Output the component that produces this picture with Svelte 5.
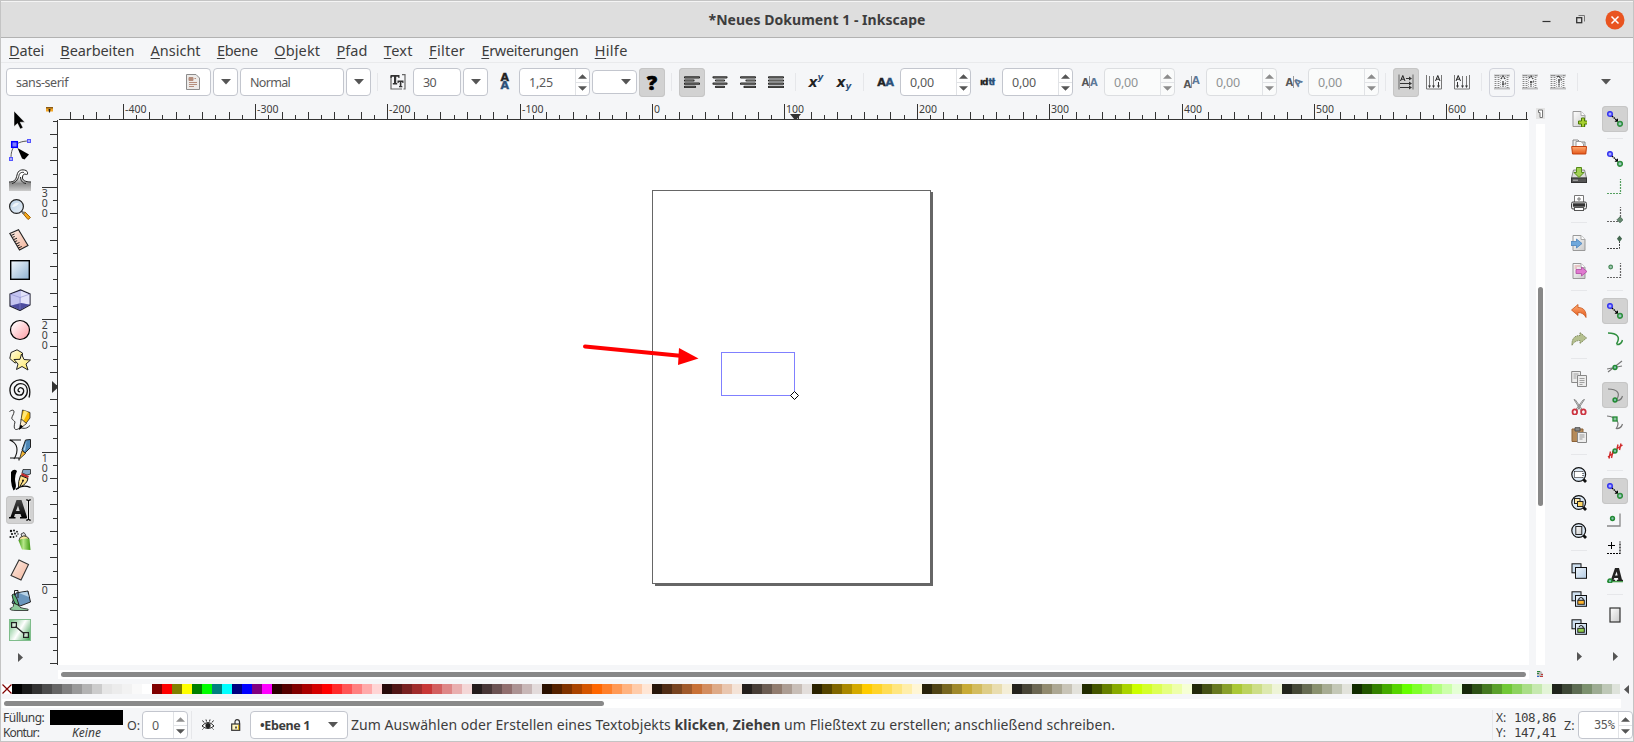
<script>
  // Stretches or tightens tracking so that a label takes the given width.
  function fit(node, width) {
    const natural = node.getBoundingClientRect().width;
    node.style.letterSpacing = (width - natural) / node.textContent.length + 'px';
  }

  const menus = [
    ['Datei', 35], ['Bearbeiten', 74], ['Ansicht', 50], ['Ebene', 41], ['Objekt', 46],
    ['Pfad', 31], ['Text', 29], ['Filter', 36], ['Erweiterungen', 97], ['Hilfe', 33]
  ];

  const palette = (
    '000000 1a1a1a 333333 4d4d4d 666666 808080 999999 b3b3b3 cccccc e6e6e6 ececec f2f2f2 f9f9f9 ffffff ' +
    '800000 ff0000 808000 ffff00 008000 00ff00 008080 00ffff 000080 0000ff 800080 ff00ff ' +
    '2b0000 550000 800000 aa0000 d40000 ff0000 ff2a2a ff5555 ff8080 ffaaaa ffd5d5 ' +
    '280b0b 501616 782121 a02c2c c83737 d35f5f de8787 e9afaf f4d7d7 ' +
    '241c1c 483737 6c5353 916f6f ac9393 c8b7b7 e3dbdb ' +
    '2b1100 552200 803300 aa4400 d45500 ff6600 ff7f2a ff9955 ffb380 ffccaa ffe6d5 ' +
    '28170b 502d16 784421 a05a2c c87137 d38d5f deaa87 e9c6af f4e3d7 ' +
    '241f1c 483e37 6c5d53 917c6f ac9d93 c8beb7 e3dedb ' +
    '2b2200 554400 806600 aa8800 d4aa00 ffcc00 ffd42a ffdd55 ffe680 ffeeaa fff6d5 ' +
    '28220b 504416 786721 a0892c c8ab37 d3bc5f decd87 e9ddaf f4eed7 ' +
    '24221c 484537 6c6753 918a6f aca793 c8c4b7 e3e2db ' +
    '222b00 445500 668000 88aa00 aad400 ccff00 d4ff2a ddff55 e5ff80 eeffaa f6ffd5 ' +
    '22280b 445016 677821 89a02c abc837 bcd35f cdde87 dde9af eef4d7 ' +
    '22241c 454837 676c53 8a916f a7ac93 c4c8b7 e2e3db ' +
    '112b00 225500 338000 44aa00 55d400 66ff00 7fff2a 99ff55 b3ff80 ccffaa e5ffd5 ' +
    '17280b 2d5016 447821 5aa02c 71c837 8dd35f aade87 c6e9af e3f4d7 ' +
    '1f241c 3e4837 5d6c53 7c916f 9dac93 bec8b7 dee3db'
  ).split(' ');

  // Ruler ticks, one for every 10 mm.
  const unit = 1.3235;
  const hTicks = [];
  for (let v = -440; v <= 660; v += 10) {
    hTicks.push({ v, x: Math.floor(594.6 + v * unit) + 0.5, major: v % 100 === 0, top: v % 100 === 0 ? 3 : v % 20 === 0 ? 11 : 14 });
  }
  const vTicks = [];
  for (let v = 350; v >= -60; v -= 10) {
    vTicks.push({ v, y: Math.floor(464.4 - v * unit) + 0.5, major: v % 100 === 0, left: v % 100 === 0 ? 3 : v % 20 === 0 ? 11 : 14 });
  }

  const tools = [
    // select
    '<path d="M5 2V17.500L8.500 14.500L11.200 20L14 18.700L11.200 13.200H15.800Z" fill="#000" stroke="#fff" stroke-width=".5"/>',
    // node
    '<path d="M2 19C2 10 5 2 20 2" fill="none" stroke="#555"/><rect x="2.700" y="2.700" width="5.600" height="5.600" fill="#7d7dff" stroke="#00f" stroke-width="1.500"/><rect x="18.500" y=".5" width="3" height="3" fill="#aaf" stroke="#55f"/><rect x=".5" y="18.500" width="3" height="3" fill="#aaf" stroke="#55f"/><path d="M8.500 9L20 15.500L15.500 20.500L13 19.500Z" fill="#000"/>',
    // tweak
    '<path d="M0 13C5 13 7 11 8 6C9 1 13 0 17 1.500C19 2.500 19 5 17.500 6C16.500 4.500 14 4.500 13.500 8C13 11 16 13 22 13V22H0Z" fill="url(#gWave)"/><path d="M0 13C5 13 7 11 8 6C9 1 13 0 17 1.500C19 2.500 19 5 17.500 6C16.500 4.500 14 4.500 13.500 8C13 11 16 13 22 13M3 14.500C8 13 9.500 9 10 6.500C10.500 3.500 13 3 15 3.500M11.500 8C11.500 11 13 14 17 14.500" fill="none" stroke="#222"/>',
    // zoom
    '<path d="M13.500 14L19 20.500L21.500 18.500L16 13Z" fill="#f4a81c" stroke="#a06000" /><path d="M12.500 12L15.500 15" stroke="#777" stroke-width="2"/><circle cx="7.500" cy="7.500" r="6.900" fill="url(#gGlass)" stroke="#222" stroke-width="1.200"/><path d="M3 8Q5 3 10 4Q8 8 3 8" fill="#fff" opacity=".7"/>',
    // measure
    '<path d="M.8 4.500L9.500 .8L19 16.500L10.500 21Z" fill="url(#gSkin)" stroke="#222" stroke-width="1.100"/><path d="M2 6.500l3.500-1.500M3.200 8.500l2.500-1M4.500 10.700l3.500-1.500M5.700 12.700l2.500-1M7 15l3.500-1.500M8.200 17l2.500-1M9.300 19l3.500-1.500" stroke="#222"/>',
    // rectangle
    '<rect x="1.700" y="1.700" width="18.600" height="18.600" fill="url(#gBlue)" stroke="#000" stroke-width="1.400"/>',
    // 3d box
    '<path d="M1 5L11.500 1L21 5V16L11 21.500L1 17Z" fill="#9a9ade" stroke="#223" stroke-width="1.200"/><path d="M1.500 5.500L12 1.800V14L1.800 16.500Z" fill="#c5c5f0"/><path d="M12 1.800L20.500 5.500V15.500L12 14Z" fill="#e3e3fa"/><path d="M1.800 16.700L12 14L20.500 15.700L11 21Z" fill="#4d4d9f"/><path d="M1 5L11 8.500L21 5M11 8.500V20" fill="none" stroke="#8888cc" opacity=".6"/>',
    // circle
    '<circle cx="11" cy="11" r="9.500" fill="url(#gPink)" stroke="#000" stroke-width="1.200"/>',
    // star
    '<path d="M8 .8L13.500 4L13 12L6 14L.8 9.500L2 3.500Z" fill="url(#gYel)" stroke="#222"/><path d="M12.500 5L15 10.500L21.500 11L17 15L19 21L13 17.500L7.500 20.500L9 15L5 10.500L11 10.300Z" fill="url(#gYel)" stroke="#222"/>',
    // spiral
    '<path d="M11 12.500C9.500 13.500 8.500 11.500 9.500 10C11 7.500 15.500 9 14.500 13C13.500 17.500 6.500 17 5.500 12C4.500 6.500 10 3.500 14 5C19.500 7 19.500 15 15.500 18.500C11 22.500 1.500 20.500 1 12C.5 4 7 .5 12 1C19 2 22.500 10 20 18.500" fill="none" stroke="#111" stroke-width="1.300"/>',
    // pencil
    '<path d="M.5 2.500C4 0 6.500 1 4 6C1 11.500 4.500 10 6 13C4 20 6 22 10 19.500C14 18 16 21.500 21 16.500" fill="none" stroke="#333"/><path d="M13.500 1L21 3.500V9L16.500 15L12 11.500Z" fill="#f8b800" stroke="#222" stroke-width=".8"/><path d="M15 1.500L12.500 10L14.500 12L19 3Z" fill="#ffe878"/><path d="M12.300 10L17.500 14.500L10.500 20Z" fill="#ffeecb" stroke="#222" stroke-width=".8"/><path d="M11.500 15.500L14 17.500L10 21Z" fill="#000"/>',
    // bezier pen
    '<path d="M1 1H12M.5 1C9 4 10 12 5 20M1 19H10V21.500" fill="none" stroke="#111" stroke-width="1.100"/><path d="M16.500 1L21.500 .5V8.500L16 14L13 11Z" fill="#4d86b5" stroke="#222"/><path d="M17.500 2L14.500 10.500L16 12Z" fill="#b7d8ee"/><path d="M13 11.500L16.500 14.500L10.500 20Z" fill="#f2b632" stroke="#222" stroke-width=".8"/>',
    // calligraphy
    '<path d="M2 3Q5-1 8 2Q5 8 6.500 14Q8 20 4.500 21.500Q2.500 18 2 12Z" fill="#000"/><path d="M7 20.500Q13 15 21.500 18.500" fill="none" stroke="#000" stroke-width="1.300"/><path d="M14 .5H21.500V5L18 6L13 4Z" fill="#86a9c9" stroke="#222" stroke-width=".8"/><path d="M12.500 4L20 7L19 9L12 6.500Z" fill="#c52a2a"/><path d="M11.500 6.500L19 9.500Q18 15 11 18L9.500 19.500Q9 12 11.500 6.500Z" fill="#ffe28a" stroke="#111"/><path d="M10 19L14 12" stroke="#111"/><circle cx="14" cy="11.500" r="1" fill="#111"/>',
    // text
    '<path d="M0 19.500V18H1.500L7.500 1H12.500L18 18H19V19.500H11V18H12.500L11.500 15H6L5 18H6.500V19.500ZM7 12H10.700L9 6.500Z" fill="url(#gInk)" fill-rule="evenodd"/><path d="M17 1Q19.300 .5 19.500 2.500Q19.700 .5 22 1M19.500 2V20M17 21Q19.300 21.500 19.500 19.500Q19.700 21.500 22 21" fill="none" stroke="#fff" stroke-width="3"/><path d="M17 1Q19.300 .5 19.500 2.500Q19.700 .5 22 1M19.500 2V20M17 21Q19.300 21.500 19.500 19.500Q19.700 21.500 22 21" fill="none" stroke="#000" stroke-width="1.200"/>',
    // spray
    '<g fill="#111"><circle cx="2" cy="2" r="1.200"/><circle cx="5" cy="1.500" r="1"/><circle cx="8" cy="2.700" r=".9"/><circle cx="3" cy="5" r="1.100"/><circle cx="6" cy="4.500" r=".9"/><circle cx="9" cy="5" r=".7"/><circle cx="1.500" cy="8" r="1.100"/><circle cx="4.500" cy="8" r=".9"/><circle cx="7.500" cy="7" r=".8"/></g><path d="M12 5L15 3.500L17 6.500L13 8Z" fill="#ddd" stroke="#222" stroke-width=".8"/><path d="M10 11.500L11 8.500Q15 5.500 18.500 8L20 10Z" fill="#f8e49c" stroke="#222" stroke-width=".8"/><path d="M9.500 11.500Q15 8.500 20.500 10L21.500 21L13 20.500Z" fill="url(#gGreen)"/>',
    // eraser
    '<path d="M10 1L19.500 5.500L12 21L2 16.500Z" fill="url(#gSkin)" stroke="#333" stroke-width="1.100"/>',
    // bucket
    '<path d="M7 4L19 2L21.500 13L11 17L3 14Z" fill="#6a96bd" stroke="#222"/><path d="M10 4L18 2.700L20 8Z" fill="#b8d4e8"/><path d="M3 6Q6 2 10 16Q5 17 3 6Z" fill="#5db277" stroke="#222"/><path d="M5.500 6V1.500H9V9" fill="none" stroke="#222"/><path d="M4 14Q6 18 1 19.500Q0 21.500 8 21.500H19Q21 20 15 19.500Q10 19 9 16Z" fill="#8ecb9c" stroke="#222" stroke-width=".8"/>',
    // gradient
    '<rect x=".5" y=".5" width="21" height="21" fill="url(#gGrad)" stroke="#7fbd8b"/><path d="M6 7L16 15.500" stroke="#222" stroke-width="1.200"/><rect x="2.600" y="3.600" width="4.800" height="4.800" fill="#fff" fill-opacity=".5" stroke="#222" stroke-width="1.200"/><rect x="14.600" y="13.600" width="4.800" height="4.800" fill="#fff" fill-opacity=".5" stroke="#222" stroke-width="1.200"/>'
  ];

  const lens = '<path d="M12 12L15 15" stroke="#111" stroke-width="2.800"/><circle cx="7.700" cy="7.500" r="6.900" fill="#dce9f6" stroke="#111" stroke-width="1.200"/>';
  const dup = '<rect x="1" y=".8" width="9" height="9" fill="#cfe0f0" stroke="#111"/><rect x="4.500" y="4.500" width="11" height="10.800" fill="url(#gPale)" stroke="#111"/>';
  const page = '<path d="M2 .5H10L14 4.500V15.500H2Z" fill="url(#gPage)" stroke="#999"/><path d="M10 .5V4.500H14" fill="#fff" stroke="#aaa"/>';
  const commands = [
    page + '<path d="M9.500 8.500h3v3h3v3h-3v3h-3v-3h-3v-3h3z" transform="translate(1 -1.500)" fill="#a8d030" stroke="#4a7a06"/>',
    '<path d="M2 1H7L9 3H14V12H2Z" fill="#eee" stroke="#888"/><path d="M5 2.500H10L12.500 5V9H5Z" fill="#fff" stroke="#999"/><path d="M.7 7.500H15.500L14.800 15H1.500Z" fill="url(#gOrange)" stroke="#c4400c"/>',
    '<path d="M2.500 3H13.500L15.500 11H.5Z" fill="#ddd" stroke="#888"/><rect x=".5" y="11" width="15" height="4.500" fill="#555" stroke="#333"/><path d="M2 13.200H7" stroke="#bbb"/><path d="M5.500 .5H10.500V5.500H13L8 10.500L3 5.500H5.500Z" fill="#a2d053" stroke="#558a18"/>',
    '<path d="M3.500 .5H12.500V8H3.500Z" fill="#fff" stroke="#777"/><path d="M8 2v4M6 4h4" stroke="#777"/><rect x=".5" y="7" width="15" height="7" rx="1.500" fill="#ddd" stroke="#444"/><rect x="2" y="8.300" width="12" height="3.400" fill="#333"/><rect x="3.500" y="12.500" width="9" height="3" fill="#fff" stroke="#555"/>',
    '|',
    page + '<path d="M0 6.500H5.500V4L11 8.500L5.500 13V10.500H0Z" fill="#6fa8dc" stroke="#4d83bb" stroke-width=".8"/>',
    page + '<path d="M3.500 3H9M3.500 5H6" stroke="#d99"/><path d="M5 6.500H10.500V4L16 8.500L10.500 13V10.500H5Z" fill="#e07ad0" stroke="#b04aa2" stroke-width=".8"/>',
    '|',
    '<path d="M.5 7L7 1.500V4.500C13 4.500 15.500 8.500 15 14.500Q12.500 9.500 7 9.500V12.500Z" fill="url(#gOrange)" stroke="#c8551b" stroke-width=".8"/>',
    '<path d="M15.500 7L9 1.500V4.500C3 4.500 .5 8.500 1 14.500Q3.500 9.500 9 9.500V12.500Z" fill="#b5c08f" stroke="#7a8458" stroke-width=".9" stroke-dasharray="1.500 .7"/>',
    '|',
    '<g fill="#ececec" stroke="#888"><path d="M.7 .5H9.500V11.500H.7Z"/><path d="M6.500 4.500H15.500V15.500H6.500Z"/></g><path d="M2.500 3h5M2.500 5h3M2.500 7h3M8.500 7.500h5M8.500 9.500h5M8.500 11.500h5M8.500 13.500h3" stroke="#999" stroke-width=".9"/>',
    '<path d="M3 .5L4.500 1L11.500 11L10 11.800ZM13.500 .5L12 1L4.500 11L6 11.800Z" fill="#ddd" stroke="#777" stroke-width=".8"/><ellipse cx="3.800" cy="13" rx="2.300" ry="2.600" fill="none" stroke="#cc3340" stroke-width="1.800"/><ellipse cx="12.400" cy="13" rx="2.300" ry="2.600" fill="none" stroke="#cc3340" stroke-width="1.800"/>',
    '<path d="M1 2H12V14.500H1Z" fill="#b58a59" stroke="#8c6239"/><path d="M4 .7H9V4H4Z" fill="#888" stroke="#555"/><path d="M6.500 5.500H15.500V15.500H6.500Z" fill="#eee" stroke="#888"/><path d="M8.500 8h5M8.500 10h5M8.500 12h3" stroke="#999"/>',
    '|',
    lens + '<rect x="3.500" y="4.500" width="8.500" height="6" fill="#fff" stroke="#000" stroke-dasharray="1 1"/>',
    lens + '<rect x="3.500" y="3.500" width="5.500" height="5" fill="#ffe9a8" stroke="#222"/><rect x="6.500" y="6.500" width="5.500" height="5" fill="#ffd766" stroke="#222"/>',
    lens + '<rect x="4.800" y="3.500" width="6" height="8" fill="url(#gPage)" stroke="#222"/>',
    '|',
    dup,
    dup + '<path d="M7.800 9.500V8Q10 5 12.200 8V9.500" fill="none" stroke="#222" stroke-width="1.200"/><rect x="6.800" y="9.300" width="6.500" height="4" fill="#ffb52e" stroke="#222"/>',
    dup + '<path d="M8 8Q10 5 12.200 8V9.500" fill="none" stroke="#222" stroke-width="1.200"/><rect x="6.800" y="9.300" width="6.500" height="4" fill="#93d24c" stroke="#222"/>'
  ];

  const gdot = (x, y) => `<circle cx="${x}" cy="${y}" r="1.900" fill="#7fc0b0" stroke="#238a34" stroke-width="1.500"/>`;
  const link = '<circle cx="3" cy="3" r="2.300" fill="#aaf" stroke="#3838f0" stroke-width="1.600"/><path d="M5 5L10 9.500" stroke="#000" stroke-width="1.300" stroke-dasharray="1.500 .7"/><path d="M7.500 10.800L11 10.800L11 7.200Z" fill="#000"/><circle cx="13" cy="12.800" r="2.300" fill="#9cc8c0" stroke="#2f8f3f" stroke-width="1.600"/>';
  const corner = '<path d="M0 14.500H13.500V0" fill="none" stroke="COL" stroke-width="1.200" stroke-dasharray="2 1"/>';
  const snaps = [
    { d: link, on: true }, '|',
    { d: link },
    { d: corner.replace('COL', '#55a060') },
    { d: corner.replace('COL', '#666') + '<path d="M13 9.800l3 3l-3 3l-3-3z" fill="#668870" stroke="#446850" stroke-width=".8"/>' },
    { d: '<path d="M0 13.500H12.500V6" fill="none" stroke="#444" stroke-dasharray="2 1"/><path d="M12.500 .5l2.600 3.200l-2.600 3.200l-2.600-3.200z" fill="#446850"/>' },
    { d: corner.replace('COL', '#666') + '<circle cx="3.700" cy="4" r="1.800" fill="#9cc8b0" stroke="#478857" stroke-width="1.200"/>' },
    '|',
    { d: link, on: true },
    { d: '<path d="M1 2C10 2 14 6 9.500 13M9.500 13.500Q14 14 15.500 9" fill="none" stroke="#2f8f3f" stroke-width="1.500"/>' },
    { d: '<path d="M1 13L15 2M0 10L15 7" stroke="#777" stroke-width="1.200"/>' + gdot(8, 8.5) },
    { d: '<path d="M1 2C10 2 14 6 9.500 13M9.500 13.500Q14 14 15.500 9" fill="none" stroke="#777" stroke-width="1.200"/>' + gdot(8, 13), on: true },
    { d: '<path d="M0 1C9 2 14 7 9 14M9 13.500Q14 14 15.500 9" fill="none" stroke="#777" stroke-width="1.200"/><rect x="6" y="2" width="4" height="4" fill="#8cc0a0" stroke="#238a34" stroke-width="1.300"/>' },
    { d: '<path d="M3.500 8.500L2 15.500M6 8L4.500 15M1 14L7 9.500M11 1.500L9.500 8M14 .5L12.500 7M9.500 6L15.500 2" stroke="#d02a2a" stroke-width="1.400"/>' + gdot(8, 8) },
    '|',
    { d: link, on: true },
    { d: '<path d="M0 15H13V2.500" fill="none" stroke="#888" stroke-width="1.300"/>' + gdot(5.5, 7.5) },
    { d: '<path d="M0 14.500H13V2.500" fill="none" stroke="#000" stroke-width="1.200" stroke-dasharray="2 1"/><path d="M4.500 3V10M1 6.500H8" stroke="#000"/>' },
    { d: '<path d="M0 14.500H16" stroke="#4aa04f" stroke-width="1.600"/><path d="M3 14V12.800H4L8 1H12L15 12.800H16V14H10V12.800H11.300L11 11H7.300L6.500 12.800H8V14ZM8 8.500H10.600L9.700 4.500Z" fill="#222" fill-rule="evenodd"/>' + gdot(3, 14) },
    '|',
    { d: '<rect x="3" y="1" width="10" height="14" fill="url(#gPage)" stroke="#333" stroke-width="1.200"/>' }
  ];

  const alignIcons = [
    [[1, 15], [1, 9.5], [1, 15], [1, 11]],
    [[1.5, 14.5], [4, 12], [1.5, 14.5], [4, 12]],
    [[1, 15], [6.5, 15], [1, 15], [4.5, 15]],
    [[1, 15], [1, 15], [1, 15], [1, 15]]
  ];
  const spacers = [
    { kind: 'letters', off: false }, { kind: 'words', off: false }, { kind: 'kern', off: true },
    { kind: 'shift', off: true }, { kind: 'rotate', off: true }
  ];
</script>

{#snippet spin(value, off, cls)}
  <div class="spin {cls}" class:off>
    <span class="val">{value}</span>
    <span class="steps">
      <svg width="10" height="5" viewBox="0 0 10 5"><path d="M0 5L5 0L10 5Z" /></svg>
      <i></i>
      <svg width="10" height="5" viewBox="0 0 10 5"><path d="M0 0H10L5 5Z" /></svg>
    </span>
  </div>
{/snippet}

{#snippet down()}
  <svg class="down" width="10" height="6" viewBox="0 0 10 6"><path d="M0 0H10L5 5.500Z" /></svg>
{/snippet}

<svg class="defs" width="0" height="0">
  <defs>
    <linearGradient id="gWave" x1="0" y1="0" x2="0" y2="1"><stop offset=".3" stop-color="#fff" /><stop offset=".65" stop-color="#8c8c8c" /><stop offset="1" stop-color="#ccc" /></linearGradient>
    <linearGradient id="gGlass" x1="0" y1="0" x2="1" y2="1"><stop offset="0" stop-color="#b9d0e6" /><stop offset="1" stop-color="#e8f0f8" /></linearGradient>
    <linearGradient id="gSkin" x1="0" y1="0" x2="1" y2="1"><stop offset="0" stop-color="#fdeee6" /><stop offset="1" stop-color="#f3b49b" /></linearGradient>
    <linearGradient id="gBlue" x1="0" y1="0" x2="1" y2="1"><stop offset="0" stop-color="#f4f8fc" /><stop offset="1" stop-color="#8fb2d2" /></linearGradient>
    <linearGradient id="gPink" x1="0" y1="0" x2="1" y2="1"><stop offset=".1" stop-color="#fff" /><stop offset="1" stop-color="#ff9aa2" /></linearGradient>
    <linearGradient id="gYel" x1="0" y1="0" x2="1" y2="1"><stop offset="0" stop-color="#fffdf0" /><stop offset="1" stop-color="#ffe85c" /></linearGradient>
    <linearGradient id="gInk" x1="0" y1="0" x2="0" y2="1"><stop offset="0" stop-color="#444" /><stop offset="1" stop-color="#000" /></linearGradient>
    <linearGradient id="gGreen"><stop offset="0" stop-color="#3f9a10" /><stop offset=".4" stop-color="#b7e88a" /><stop offset="1" stop-color="#3f9a10" /></linearGradient>
    <linearGradient id="gGrad" x1="0" y1=".2" x2="1" y2=".8"><stop offset="0" stop-color="#7cc48b" /><stop offset=".5" stop-color="#fff" /><stop offset="1" stop-color="#4faa62" /></linearGradient>
    <linearGradient id="gPale" x1="0" y1="0" x2="1" y2="1"><stop offset="0" stop-color="#eef5fc" /><stop offset="1" stop-color="#b4cce4" /></linearGradient>
    <linearGradient id="gPage" x1="0" y1="0" x2="1" y2="1"><stop offset="0" stop-color="#fff" /><stop offset="1" stop-color="#c9c9c9" /></linearGradient>
    <linearGradient id="gOrange" x1="0" y1="0" x2="0" y2="1"><stop offset="0" stop-color="#ffac74" /><stop offset="1" stop-color="#e4581a" /></linearGradient>
  </defs>
</svg>

<div class="window">
  <header>
    <h1><span use:fit={217}>*Neues Dokument 1 - Inkscape</span></h1>
    <div class="controls">
      <svg width="9" height="9" viewBox="0 0 9 9"><path d="M.5 6.500H8.500" stroke="#333" stroke-width="1.200" /></svg>
      <svg class="restore" width="9" height="9" viewBox="0 0 9 9"><rect x=".7" y="2.700" width="5" height="5" fill="none" stroke="#333" stroke-width="1.300" /><path d="M2.500 .5H8.500V6.500" fill="none" stroke="#777" /></svg>
      <svg width="20" height="20" viewBox="0 0 20 20"><circle cx="10" cy="10" r="9.500" fill="#e95420" /><path d="M6.500 6.500L13.500 13.500M13.500 6.500L6.500 13.500" stroke="#fff" stroke-width="1.500" /></svg>
    </div>
  </header>

  <nav>
    {#each menus as [name, w]}
      <a style:width="{w}px"><span use:fit={w}><u>{name[0]}</u>{name.slice(1)}</span></a>
    {/each}
  </nav>

  <div class="toolbar">
    <div class="box family">
      <span use:fit={52}>sans-serif</span>
      <svg width="14" height="16" viewBox="0 0 14 16"><path d="M.5 .5H10L13.500 4V15.500H.5Z" fill="#eceae8" stroke="#8c8c8c" /><path d="M3 3.500H7V6.500H3ZM3 8.500H11M3 10.500H11M3 12.500H8M8.500 4.500H10" fill="#b58d7c" stroke="#b58d7c" /></svg>
    </div>
    <div class="box drop">{@render down()}</div>
    <div class="box style"><span use:fit={40}>Normal</span></div>
    <div class="box drop">{@render down()}</div>
    <i class="sep"></i>
    <div class="btn"><svg width="16" height="16" viewBox="0 0 16 16"><path d="M1 2V15H12M12 .7H15V15H13.500" fill="none" stroke="#666" stroke-width="1.200" /><path d="M.5 1H9.500V4H8.500L8 2.800H6.200V9H7.200V10.500H2.800V9H4V2.800H2L1.500 4H.5Z" fill="#333" /><path d="M7.500 6.500H13.500V9H12.500L12 8H11.400V12H12.300V13.200H9V12H9.800V8H9L8.500 9H7.500Z" fill="#333" /></svg></div>
    <div class="box size"><span use:fit={13}>30</span></div>
    <div class="box drop">{@render down()}</div>
    <div class="lab stack"><b>A</b><b class="blue">A</b></div>
    {@render spin('1,25', false, '')}
    <div class="box unit">{@render down()}</div>
    <div class="btn on quest">?</div>
    <i class="sep"></i>
    {#each alignIcons as rows, i}
      <div class="btn" class:on={i === 0}>
        <svg width="16" height="16" viewBox="0 0 16 16">
          {#each rows as [a, b], r}
            <path d="M{a} {3.3 + r * 3.2}H{b}" stroke="#222" stroke-width="2.200" stroke-linecap="round" />
            <path d="M{a} {3.3 + r * 3.2}H{b}" stroke="#8b8b84" stroke-width=".6" />
          {/each}
        </svg>
      </div>
    {/each}
    <i class="sep"></i>
    <div class="btn script"><b>x</b><sup>y</sup></div>
    <div class="btn script"><b>x</b><sub>y</sub></div>
    <i class="sep"></i>
    {#each spacers as s}
      <div class="lab" class:dim={s.off}>
        {#if s.kind === 'letters'}
          <b class="wide">A</b><b class="wide blue">A</b>
        {:else if s.kind === 'words'}
          <b class="word">ıd</b><b class="word blue">tł</b>
        {:else if s.kind === 'kern'}
          <b>A</b><i class="bar"></i><b class="blue">A</b>
        {:else if s.kind === 'shift'}
          <b class="low">A</b><i class="bar"></i><b class="blue high">A</b>
        {:else}
          <b>A</b><i class="bar"></i><b class="blue turn">A</b>
        {/if}
      </div>
      {@render spin('0,00', s.off, '')}
    {/each}
    <i class="sep"></i>
    {#each [0, 1, 2] as k}
      <div class="btn" class:on={k === 0}>
        <svg width="16" height="16" viewBox="0 0 16 16">
          {#if k === 0}
            <path d="M1 .5V15.500M15 .5V15.500" stroke="#666" />
            <path d="M8 4.500H13M2 9.500H13M2 13.500H13" stroke="#333" /><path d="M11 2.500l3 2l-3 2zM11 7.500l3 2l-3 2zM11 11.500l3 2l-3 2z" fill="#333" />
            <path d="M2.500 7L4.800 1.500L7 7M3.200 5.200H6.200" fill="none" stroke="#222" />
          {:else}
            <g transform={k === 2 ? 'translate(16 0) scale(-1 1)' : ''}>
              <path d="M.5 1V15M3.500 2V13M7.500 2V13M.5 15H15.500V1" fill="none" stroke="#777" /><path d="M12.500 8V13" stroke="#333" />
              <path d="M2 11.500h3l-1.500 2.500zM6 11.500h3l-1.500 2.500zM11 11.500h3l-1.500 2.500z" fill="#333" />
              <path d="M9.500 7L11.800 1.500L14 7M10.200 5.200H13.200" fill="none" stroke="#222" />
            </g>
          {/if}
        </svg>
      </div>
    {/each}
    <i class="sep"></i>
    {#each [0, 1, 2] as k}
      <div class="btn" class:ring={k === 0}>
        <svg width="16" height="16" viewBox="0 0 16 16">
          <path d="M1.500 1V15M4.500 1V15M13.500 1V15M.5 1.500H15.500M.5 14.500H15.500" stroke="#888" stroke-width="1.800" stroke-dasharray="1 1" />
          <path d="M7 {5 - k}L9 2L11 5M8 {10 - k * 2}H12M9 7V13" fill="none" stroke="#444" stroke-width="1.300" stroke-dasharray="2 .6" />
          <path d="M6.500 2V14M11.500 2V14" stroke="#aaa" stroke-dasharray="1 1" />
        </svg>
      </div>
    {/each}
    <i class="sep"></i>
    <div class="more">{@render down()}</div>
  </div>

  <main>
    <aside class="tools">
      {#each tools as t, i}
        <div class="tool"><div class="face" class:on={i === 13}><svg width="22" height="22" viewBox="0 0 22 22">{@html t}</svg></div></div>
      {/each}
      <svg class="next" width="5" height="9" viewBox="0 0 5 9"><path d="M0 0L5 4.500L0 9Z" /></svg>
    </aside>

    <section class="work">
      <div class="corner"><svg width="7" height="6" viewBox="0 0 7 6"><rect width="7" height="4.500" fill="#f5a623" /><rect width="7" height="1.500" fill="#8a5a14" /><path d="M2.500 2H4.500L4 5.500H3Z" fill="#222" /></svg></div>
      <svg class="hruler" width="1471" height="19" viewBox="0 0 1471 19">
        <path d="M1 18.500H1470" stroke="#333" />
        {#each hTicks as t}
          <path d="M{t.x} {t.top}V18" stroke="#333" />
          {#if t.major}<text x={t.x + 1.5} y="12.300" textLength={String(t.v).replace('-', '').length * 6 + (t.v < 0 ? 3.5 : 0)} lengthAdjust="spacingAndGlyphs">{t.v}</text>{/if}
        {/each}
        <path d="M732 13H743L738.500 18.500H736.500Z" fill="#333" />
      </svg>
      <svg class="vruler" width="19" height="545" viewBox="0 0 19 545">
        <path d="M18.500 0V545" stroke="#333" />
        {#each vTicks as t}
          <path d="M{t.left} {t.y}H18" stroke="#333" />
          {#if t.major}
            {#each String(t.v) as ch, k}<text x="2.800" y={t.y + 9.5 + k * 10}>{ch}</text>{/each}
          {/if}
        {/each}
        <path d="M13 261V273L18.500 268V266Z" fill="#333" />
      </svg>
      <svg class="canvas" width="1471" height="545" viewBox="0 0 1471 545">
        <rect x="597" y="72" width="278" height="394" fill="#666" />
        <rect x="594.500" y="70.500" width="278" height="393" fill="#fff" stroke="#666" />
        <rect x="663.500" y="232.500" width="73" height="43" fill="none" stroke="#8080ff" />
        <path d="M736.500 271.500L740.500 275.500L736.500 279.500L732.500 275.500Z" fill="#fff" stroke="#000" />
        <path d="M527 226.500L622 235.800" stroke="#f00" stroke-width="4" stroke-linecap="round" />
        <path d="M621 228L640.500 238.500L620 245Z" fill="#f00" />
      </svg>
      <div class="lockview"><svg width="9" height="11" viewBox="0 0 9 11"><rect width="9" height="11" fill="#e4e4e4" /><path d="M2.500 4V2H6.500V9.500H4V4.500H2.500Z" fill="#fff" stroke="#777" /></svg></div>
      <div class="vscroll"><i></i></div>
      <div class="hscroll"><i></i></div>
      <svg class="cms" width="6" height="6" viewBox="0 0 6 6"><path d="M0 0H4L6 3V6H0Z" fill="#bbb" /><path d="M0 .5H3M0 2.500H2" stroke="#2a8a3a" /><path d="M3 5.500H6M4 3.500H6" stroke="#c23a3a" /><path d="M0 5.500H2" stroke="#36c" /></svg>
    </section>

    <aside class="side">
      {#each commands as c}
        {#if c === '|'}<i class="hsep"></i>{:else}<div class="cell"><svg width="16" height="16" viewBox="0 0 16 16">{@html c}</svg></div>{/if}
      {/each}
      <svg class="next" width="5" height="9" viewBox="0 0 5 9"><path d="M0 0L5 4.500L0 9Z" /></svg>
    </aside>
    <aside class="side">
      {#each snaps as s}
        {#if s === '|'}<i class="hsep"></i>{:else}<div class="cell" class:on={s.on}><svg width="16" height="16" viewBox="0 0 16 16">{@html s.d}</svg></div>{/if}
      {/each}
      <svg class="next late" width="5" height="9" viewBox="0 0 5 9"><path d="M0 0L5 4.500L0 9Z" /></svg>
    </aside>
  </main>

  <div class="palette">
    <svg class="none" width="10" height="10" viewBox="0 0 10 10"><rect width="10" height="10" fill="#fff" /><path d="M.5 .5L9.500 9.500M9.500 .5L.5 9.500" stroke="#800000" stroke-width="1.200" /></svg>
    <div class="swatches">{#each palette as c}<i style:background="#{c}"></i>{/each}</div>
    <svg class="back" width="5" height="9" viewBox="0 0 5 9"><path d="M5 0L0 4.500L5 9Z" fill="#555" /></svg>
  </div>
  <div class="pscroll"><i></i></div>

  <footer>
    <div class="fill">
      <span use:fit={43}>Füllung:</span><i class="black"></i>
      <span use:fit={41}>Kontur:</span><em><span use:fit={29}>Keine</span></em>
    </div>
    <span class="op">O:</span>
    {@render spin('0', false, 'opacity')}
    <i class="vline"></i>
    <svg class="eye" width="14" height="12" viewBox="0 0 14 12"><path d="M1 7Q7 0 13 7Q7 12 1 7Z" fill="#fff" stroke="#222" /><circle cx="7" cy="6.500" r="2.600" fill="#222" /><path d="M3 3.500L1.500 1.500M5.500 2.500L5 .5M8.500 2.500L9 .5M11 3.500L12.500 1.500M2.500 9.500l-1 1M11.500 9.500l1 1" stroke="#222" /></svg>
    <svg class="padlock" width="10" height="12" viewBox="0 0 10 12"><path d="M4 5V3Q4 .7 6 .7Q8.500 .7 8.500 3V5" fill="none" stroke="#333" stroke-width="1.200" /><rect x=".7" y="5" width="8" height="6.300" fill="#fff6c2" stroke="#333" stroke-width="1.200" /><path d="M5 7.500V9.500" stroke="#222" stroke-width="1.500" /><path d="M7.500 6V11" stroke="#e0b010" /></svg>
    <div class="box layer"><b use:fit={50}>•Ebene 1</b>{@render down()}</div>
    <p><span use:fit={764}>Zum Auswählen oder Erstellen eines Textobjekts <b>klicken</b>, <b>Ziehen</b> um Fließtext zu erstellen; anschließend schreiben.</span></p>
    <div class="coords"><span>X:</span><code use:fit={42}>108,86</code><span>Y:</span><code use:fit={42}>147,41</code></div>
    <span class="z">Z:</span>
    {@render spin('35%', false, 'zoom')}
  </footer>
</div>

<style>
  :global(body) { background: #f5f6f7; }
  .defs { position: absolute; }
  .window { box-sizing: border-box; width: 1634px; height: 742px; overflow: hidden; display: flex; flex-direction: column; border: 1px solid #c4c4c4; background: #f5f6f8; font-family: "Noto Sans", "Open Sans", sans-serif; color: #3d3d3d; }
  svg { display: block; flex: none; }
  span { white-space: nowrap; }

  header { box-sizing: border-box; height: 37px; flex: none; border-top: 1px solid #f4f4f4; border-bottom: 1px solid #b2b2b2; background: #dedede; display: grid; grid-template-columns: 1fr auto 1fr; align-items: center; }
  h1 { grid-column: 2; margin: 0; width: 217px; font-size: 14px; line-height: 20px; font-weight: 700; }
  .controls { display: flex; justify-content: flex-end; align-items: center; padding-right: 8px; }
  .restore { margin: 0 20px 0 25px; }

  nav { box-sizing: border-box; height: 25px; flex: none; display: flex; gap: 16.300px; padding-left: 8px; border-bottom: 1px solid #e9eaec; font-size: 14.500px; line-height: 24px; }
  nav a { display: block; flex: none; }
  nav u { text-decoration-thickness: 1px; text-underline-offset: 2px; }

  .toolbar { height: 38px; flex: none; display: flex; align-items: center; gap: 2px; padding-left: 5px; font-size: 12.500px; color: #5a5a5a; }
  .box, .spin { box-sizing: border-box; height: 28px; flex: none; border: 1px solid #c3c6ce; border-radius: 4px; background: #fff; display: flex; align-items: center; }
  .family { width: 205px; padding: 0 10px 0 9px; justify-content: space-between; }
  .style { width: 104px; padding-left: 9px; }
  .size { width: 48px; padding-left: 9px; }
  .drop { width: 25px; justify-content: center; }
  .unit { width: 45px; height: 24px; justify-content: flex-end; padding-right: 5px; }
  .down { fill: #555; }
  .spin { width: 71px; justify-content: space-between; overflow: hidden; }
  .val { padding-left: 9px; letter-spacing: -.2px; }
  .steps { width: 14px; height: 100%; flex: none; border-left: 1px solid #e1e3e6; display: flex; flex-direction: column; align-items: center; justify-content: space-between; padding: 5px 0 4px; box-sizing: border-box; fill: #555; }
  .steps svg { width: 9px; }
  .steps i { width: 100%; height: 1px; background: #e1e3e6; }
  .off { background: #fafbfb; border-color: #dcdee1; color: #909394; }
  .off .steps { fill: #8c8c8c; }
  .sep { width: 10px; height: 18px; flex: none; background: linear-gradient(90deg, transparent 4px, #e6e7ea 4px 5px, transparent 5px); }
  .btn { box-sizing: border-box; width: 26px; height: 29px; flex: none; border-radius: 4px; display: flex; align-items: center; justify-content: center; }
  .on { background: #d2d2d2; box-shadow: inset 0 0 0 1px #c6c6c6; }
  .ring { border: 1px solid #d2d4dc; }
  .quest { font: 900 20px "Noto Sans", sans-serif; color: #000; -webkit-text-stroke: .7px #000; }
  .lab { width: 25px; padding-left: 2px; height: 28px; flex: none; display: flex; align-items: center; justify-content: center; font: 700 11px "DejaVu Sans", sans-serif; color: #222; letter-spacing: -.3px; }
  .blue { color: #2a4f78; }
  .stack { flex-direction: column; gap: 0; font-size: 11px; line-height: 8.500px; }
  .stack b { -webkit-text-stroke: .4px; }
  .wide { font-size: 11px; -webkit-text-stroke: .4px; }
  .word { font-size: 9px; margin-right: 1px; letter-spacing: -1px; -webkit-text-stroke: .3px; }
  .dim { opacity: .75; font-size: 10px; }
  .bar { width: 1px; height: 12px; background: #777; flex: none; }
  .low { margin-top: 4px; }
  .high { margin-bottom: 4px; }
  .turn { transform: rotate(-50deg); }
  .script { font: italic 700 14px "DejaVu Sans", sans-serif; color: #222; }
  .script sup, .script sub { font-size: 9px; color: #2a4f78; line-height: 9px; }
  .script sup { margin-bottom: 9px; }
  .script sub { margin-top: 9px; }
  .more { flex: 1; padding-left: 16px; }

  main { height: 580px; flex: none; display: flex; }
  .tools { width: 38px; flex: none; padding-top: 4px; display: flex; flex-direction: column; align-items: center; }
  .tool { height: 30px; display: flex; align-items: center; }
  .face { width: 28px; height: 28px; border-radius: 4px; display: flex; align-items: center; justify-content: center; }
  .next { fill: #555; margin-top: 8px; }
  .work { width: 1522px; flex: none; display: grid; grid-template-columns: 19px 1471px 7px 9px 16px; grid-template-rows: 19px 545px 5px 9px; }
  .work text { font-size: 10.500px; fill: #3d3d3d; }
  .corner { padding: 6px 0 0 7px; }
  .hruler { grid-area: 1 / 2; }
  .vruler { grid-area: 2 / 1; }
  .canvas { grid-area: 2 / 2; background: #fff; }
  .lockview { grid-area: 1 / 4; padding-top: 7px; }
  .vscroll { grid-area: 2 / 4; margin-top: 4px; background: #fff; padding: 163px 2px 0; }
  .vscroll i { display: block; width: 5px; height: 219px; border-radius: 3px; background: #888; }
  .hscroll { grid-area: 4 / 2; background: #fff; padding: 2px 3px; }
  .hscroll i { display: block; height: 5px; border-radius: 3px; background: #888; }
  .cms { grid-area: 4 / 4; margin: 1px 0 0 1px; }
  .side { width: 36px; flex: none; padding-top: 4px; display: flex; flex-direction: column; align-items: center; }
  .cell { width: 26px; height: 26px; margin: 1px 0; flex: none; border-radius: 4px; display: flex; align-items: center; justify-content: center; }
  .hsep { width: 16px; height: 12px; flex: none; background: linear-gradient(transparent 5px, #e6e7ea 5px 6px, transparent 6px); }
  .side .next { margin-top: 11px; }
  .side .late { margin-top: 23px; }

  .palette { height: 10px; flex: none; margin-top: 3px; display: flex; align-items: center; padding-left: 1px; }
  .swatches { width: 1608px; height: 10px; overflow: hidden; display: flex; }
  .swatches i { width: 10px; height: 10px; flex: none; }
  .back { margin-left: 4px; }
  .pscroll { height: 5px; flex: none; margin: 5px 12px 0 1px; padding: 2px; background: #fff; }
  .pscroll i { display: block; width: 600px; height: 5px; border-radius: 3px; background: #8a8a8a; }

  footer { flex: 1; display: flex; align-items: center; padding: 1px 0 0 2px; }
  .fill { display: grid; grid-template-columns: 47px 73px; grid-template-rows: 15px 15px; align-items: center; font-size: 12px; line-height: 15px; }
  .fill em { text-align: center; }
  .black { height: 15px; background: #000; }
  .op { width: 15px; padding-left: 4px; font-size: 12.500px; }
  footer .spin { font-size: 12.500px; color: #5a5a5a; }
  .opacity { width: 46px; }
  .opacity .val { padding-left: 9px; }
  .opacity .steps svg:first-child { opacity: .65; }
  .vline { width: 1px; height: 28px; background: #e6e7ea; margin: 0 9px 0 3px; }
  .padlock { margin: 0 9px 0 16px; }
  .layer { width: 98px; padding: 0 9px; justify-content: space-between; font-size: 12.500px; }
  .layer b { white-space: nowrap; }
  p { flex: 1; margin: 0 0 0 3px; font-size: 14px; line-height: 20px; white-space: nowrap; }
  .coords { height: 30px; border-left: 1px solid #e6e7ea; padding-left: 3px; display: grid; grid-template-columns: 18px 50px; grid-template-rows: 15px 15px; font-size: 12px; line-height: 15px; }
  code { font: 12.500px/15px "DejaVu Sans Mono", monospace; white-space: nowrap; justify-self: start; }
  .z { width: 14px; font-size: 12.500px; }
  .zoom { width: 55px; }
  .zoom .val { font: 12px "DejaVu Sans Mono", monospace; padding-left: 15px; flex: 1; min-width: 0; overflow: hidden; letter-spacing: -.4px; }
</style>
